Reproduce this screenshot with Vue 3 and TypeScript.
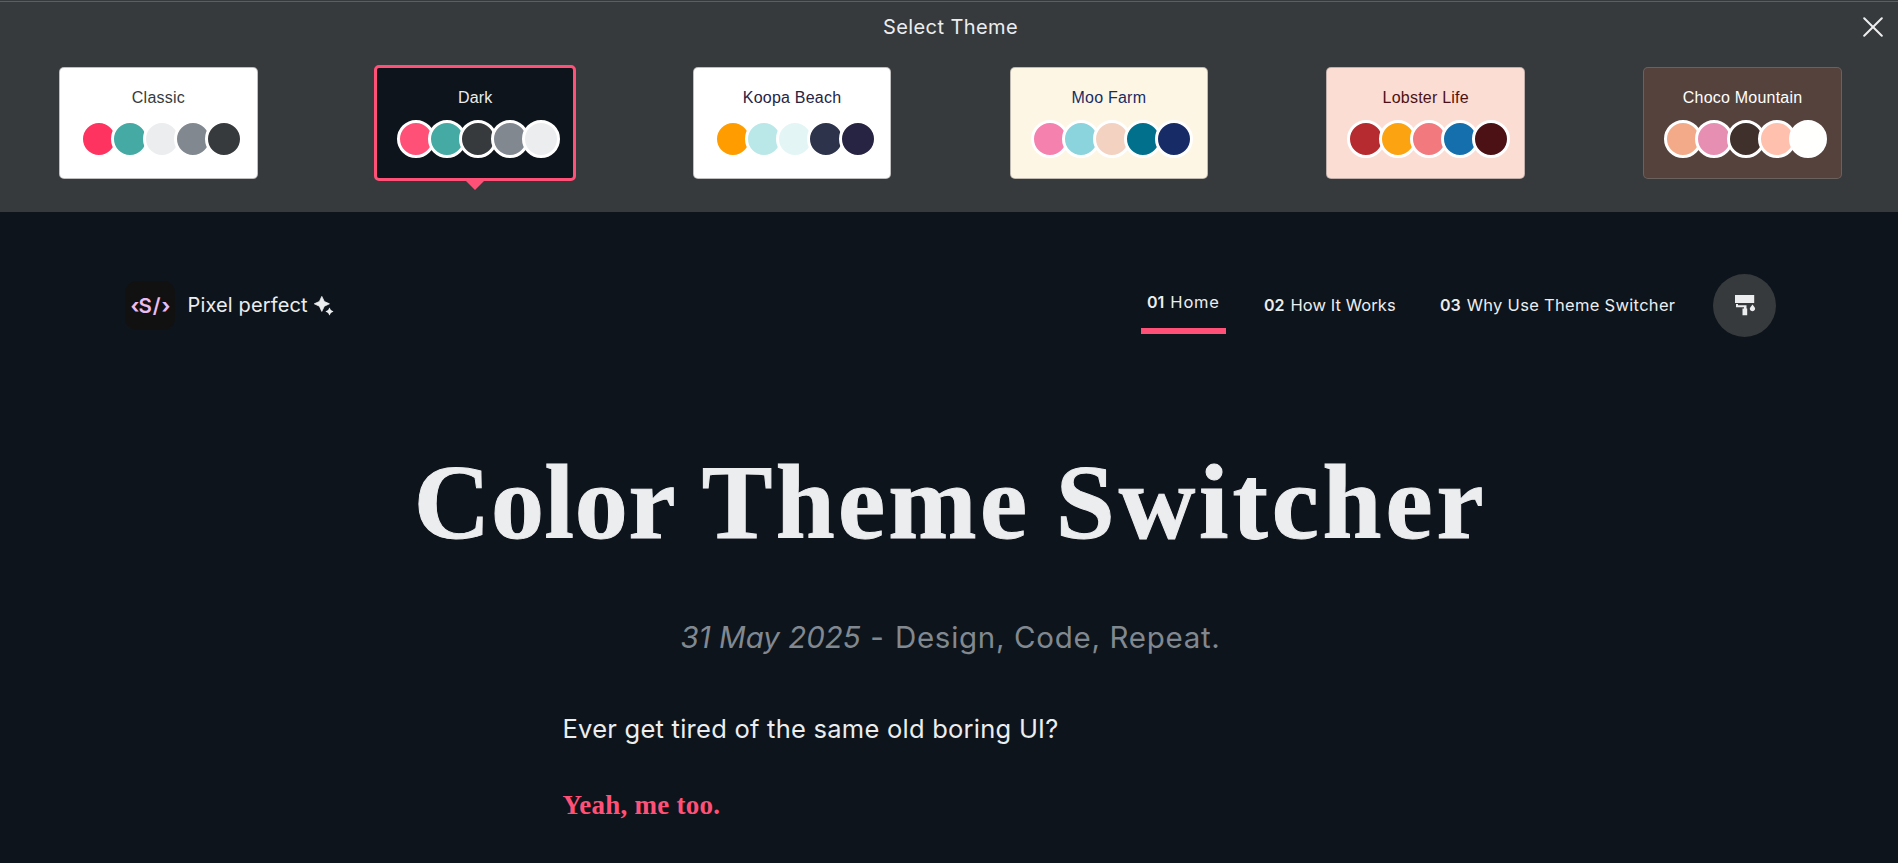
<script setup lang="ts">
interface Theme {
  name: string
  background: string
  text: string
  swatches: string[]
}

const themes: Theme[] = [
  { name: 'Classic', background: '#ffffff', text: '#373a3c', swatches: ['#ff3360', '#44aaa3', '#ecedef', '#818890', '#373a3c'] },
  { name: 'Dark', background: '#0d141b', text: '#ecedef', swatches: ['#ff5177', '#44aaa3', '#373a3c', '#818890', '#ecedef'] },
  { name: 'Koopa Beach', background: '#ffffff', text: '#272343', swatches: ['#ff9d00', '#bae8e8', '#e3f6f5', '#2d334a', '#272343'] },
  { name: 'Moo Farm', background: '#fef6e4', text: '#172c66', swatches: ['#f582ae', '#8bd3dd', '#f3d2c1', '#00708c', '#172c66'] },
  { name: 'Lobster Life', background: '#fcddd3', text: '#4b1115', swatches: ['#b62b2f', '#fca311', '#f2797d', '#156fad', '#4b1115'] },
  { name: 'Choco Mountain', background: '#55423d', text: '#fffffe', swatches: ['#f3aa88', '#e78fb3', '#40302c', '#ffc0ad', '#fffffe'] },
]

const active = 'Dark'

const links = [
  { number: '01', label: 'Home', current: true },
  { number: '02', label: 'How It Works', current: false },
  { number: '03', label: 'Why Use Theme Switcher', current: false },
]
</script>

<template>
  <div class="page">
    <section class="panel">
      <div class="panel-head">
        <h2 class="panel-title">Select Theme</h2>
        <button class="close" aria-label="Close">
          <svg width="20" height="20" viewBox="0 0 20 20">
            <path d="M1.2 1.2 18.8 18.8M18.8 1.2 1.2 18.8" fill="none" stroke="#ecedef" stroke-width="2" stroke-linecap="round" />
          </svg>
        </button>
      </div>
      <div class="themes">
        <div v-for="theme in themes" :key="theme.name" class="cell">
          <button
            class="card"
            :class="{ active: theme.name === active }"
            :style="{ background: theme.background, color: theme.text }"
          >
            <span class="card-name">{{ theme.name }}</span>
            <span class="swatches">
              <span v-for="(color, i) in theme.swatches" :key="i" class="swatch" :style="{ background: color }"></span>
            </span>
          </button>
        </div>
      </div>
    </section>

    <header class="header">
      <a class="brand">
        <span class="logo"><i>‹</i><b>S</b><b class="slash">/</b><i>›</i></span>
        <span class="brand-name">Pixel perfect</span>
        <svg class="sparkle" width="20" height="20" viewBox="0 0 20 20" fill="#ecedef">
          <path d="M7.8 .4 10.3 5.5 15.4 7.8 10.3 10.2 7.8 15.4 5.4 10.2 .3 7.8 5.4 5.5Z" stroke="#ecedef" stroke-width=".8" stroke-linejoin="round" />
          <path d="M15.5 11.5 16.9 14.1 19.5 15.5 16.9 16.9 15.5 19.5 14.1 16.9 11.5 15.5 14.1 14.1Z" />
        </svg>
      </a>
      <nav class="nav">
        <a v-for="link in links" :key="link.number" class="link" :class="{ current: link.current }">
          <b>{{ link.number }}</b><span>{{ link.label }}</span>
        </a>
        <button class="paint" aria-label="Select theme">
          <svg width="21" height="21" viewBox="0 0 21 21" fill="#ecedef">
            <path d="M0 0H19.2V8H0Z" />
            <path d="M1 9H3V10.3H11.5V13.5H12.2V20.3H7.5V13.5H9V12.3H1Z" />
            <path d="M17.5 9.6 19.4 12Q20.5 13.2 20 14.6 19.2 16.3 17.5 16.3 15.5 16.3 14.9 14.6 14.4 13.2 15.6 12Z" />
          </svg>
        </button>
      </nav>
    </header>

    <main class="content">
      <h1 class="title"><span class="w1">Color</span> <span class="w2">Theme</span> <span class="w3">Switcher</span></h1>
      <p class="subtitle"><em>31 May 2025</em><span class="dash">-</span><span class="motto">Design, Code, Repeat.</span></p>
      <div class="article">
        <p class="lead">Ever get tired of the same old boring UI?</p>
        <h3 class="reply">Yeah, me too.</h3>
      </div>
    </main>
  </div>
</template>

<style>
body {
  background: #0d141b;
  overflow: hidden;
}
</style>

<style scoped>
.page {
  width: 1901px;
  height: 863px;
  overflow: hidden;
  background: #0d141b;
  color: #ecedef;
  font-family: Inter, 'Open Sans', sans-serif;
}
h1, h2, h3, p {
  margin: 0;
}
button {
  border: 0;
  padding: 0;
  margin: 0;
}
.panel {
  box-sizing: border-box;
  height: 212px;
  padding-top: 2px;
  background: linear-gradient(#373a3c 1px, #615d5d 1px, #615d5d 2px, #373a3c 2px);
}
.panel-head {
  display: grid;
  grid-template-columns: 1fr auto 1fr;
  align-items: center;
  height: 50px;
}
.panel-title {
  grid-column: 2;
  font-size: 20px;
  font-weight: 400;
  letter-spacing: 0.42px;
}
.close {
  justify-self: end;
  width: 20px;
  height: 20px;
  margin-right: 18px;
  background: none;
}
.close svg {
  display: block;
}
.themes {
  display: grid;
  grid-template-columns: repeat(6, 1fr);
  height: 142px;
}
.cell {
  display: flex;
  align-items: center;
  justify-content: center;
}
.card {
  position: relative;
  box-sizing: border-box;
  display: flex;
  flex-direction: column;
  align-items: center;
  width: 198.6px;
  height: 112px;
  padding-top: 19px;
  border: 1px solid rgba(129, 128, 128, 0.5);
  border-radius: 5px;
  font: 16px 'Liberation Sans', Arial, sans-serif;
}
.card.active {
  width: 202px;
  height: 116px;
  border: 3px solid #ff5177;
}
.card.active::after {
  content: '';
  position: absolute;
  top: 113px;
  left: 89px;
  border: 9px solid transparent;
  border-top-color: #ff5177;
  border-bottom: 0;
}
.card-name {
  line-height: 22px;
  letter-spacing: 0.22px;
}
.swatches {
  display: flex;
  width: 156.6px;
  margin-top: 11px;
}
.swatch {
  flex: none;
  width: 32px;
  height: 32px;
  margin-right: -6.8px;
  border: 3px solid #ffffff;
  border-radius: 50%;
  background-clip: padding-box;
}
.header {
  box-sizing: border-box;
  display: flex;
  align-items: center;
  justify-content: space-between;
  height: 187px;
  padding: 0 125px;
}
.brand {
  display: flex;
  align-items: center;
}
.logo {
  display: flex;
  align-items: center;
  justify-content: center;
  width: 50px;
  height: 49px;
  border-radius: 12px;
  background: #111111;
  color: #ebbcf0;
  font-size: 20.5px;
  line-height: 47px;
}
.logo b {
  font-weight: 600;
}
.logo .slash {
  font-weight: 600;
  margin: 0 1px;
}
.logo i {
  width: 8px;
  font-style: normal;
  font-weight: 700;
  text-align: center;
}
.brand-name {
  width: 126.5px;
  margin-left: 12.5px;
  font-size: 20px;
  line-height: 24px;
  padding-bottom: 1px;
  letter-spacing: 0.14px;
  white-space: nowrap;
}
.nav {
  display: grid;
  grid-template-columns: 85px 144px 247px 63px;
  align-items: center;
  gap: 32px;
  font-size: 16px;
}
.link {
  display: flex;
  gap: 6px;
  padding: 0 6px;
  line-height: 51px;
  white-space: nowrap;
}
.link b {
  font-weight: 600;
}
.link span {
  font-size: 16.5px;
  letter-spacing: 0.3px;
}
.link:nth-child(2) span {
  letter-spacing: 0.08px;
}
.link.current {
  border-bottom: 6px solid #ff5177;
}
.link.current span {
  letter-spacing: 0.8px;
}
.paint {
  display: flex;
  align-items: center;
  justify-content: center;
  box-sizing: border-box;
  width: 63px;
  height: 63px;
  padding-left: 1px;
  border-radius: 50%;
  background: #373a3c;
}
.title {
  margin-top: 44px;
  font: bold 106px/120px 'Liberation Serif', serif;
  letter-spacing: -1px;
  text-align: center;
  white-space: nowrap;
  -webkit-text-stroke: 1px #ecedef;
}
.w1 {
  letter-spacing: 0.7px;
}
.w2 {
  letter-spacing: 3.3px;
}
.w3 {
  letter-spacing: 3.9px;
}
.subtitle {
  display: flex;
  width: 540px;
  margin: 53px auto 0;
  color: #818890;
  font-size: 29.5px;
  line-height: 42px;
  white-space: nowrap;
}
.subtitle em {
  width: 191px;
}
.dash {
  width: 25px;
}
.motto {
  letter-spacing: 0.7px;
}
.article {
  width: 776px;
  margin: 50px auto 0;
}
.lead {
  font-size: 25.5px;
  line-height: 42px;
  letter-spacing: 0.25px;
  white-space: nowrap;
}
.reply {
  margin-top: 34px;
  color: #ff5177;
  font: bold 27px/42px 'Liberation Serif', serif;
  letter-spacing: 0.25px;
}
</style>
